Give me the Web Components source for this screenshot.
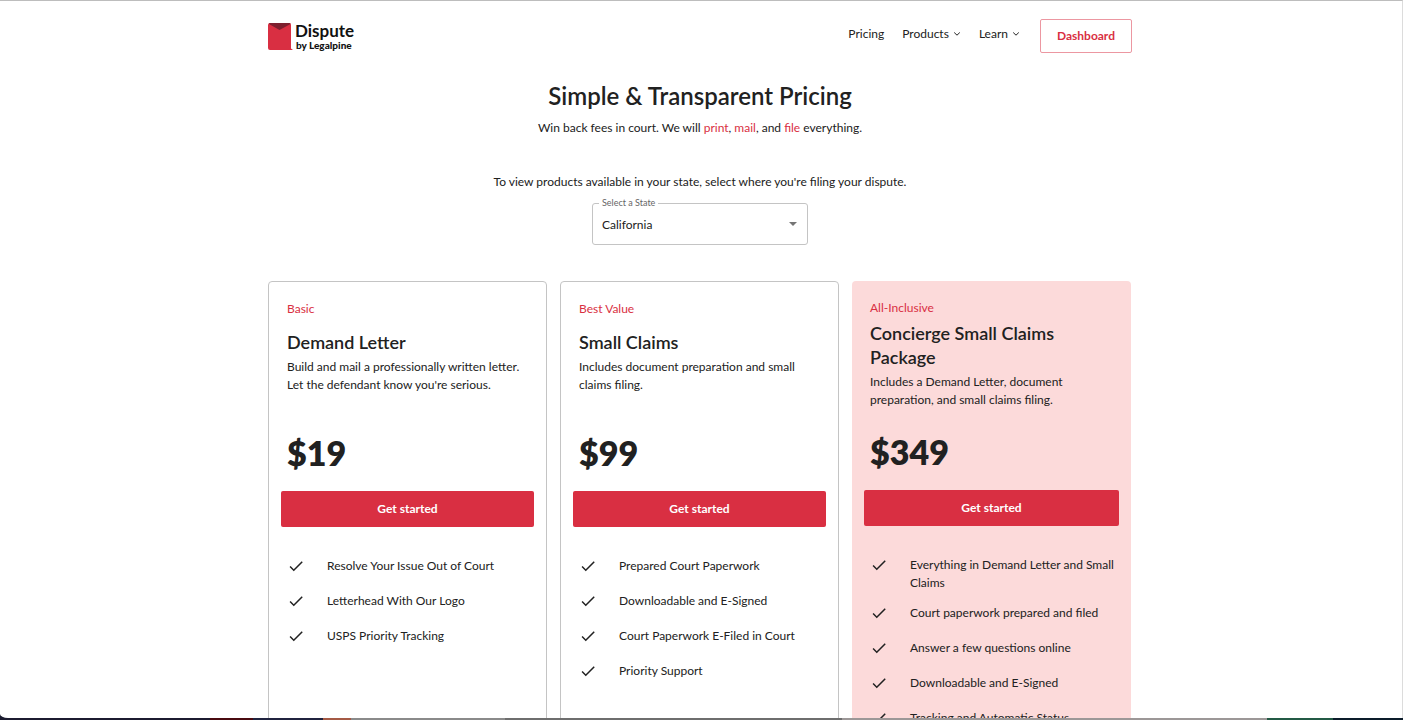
<!DOCTYPE html>
<html lang="en">
<head>
<meta charset="utf-8">
<meta name="viewport" content="width=device-width, initial-scale=1">
<title>Dispute by Legalpine – Pricing</title>
<style>
  html, body { margin: 0; height: 100%; }
  body {
    --brand: #d92f42;
    --ink: #212121;
    --line: #c4c4c4;
    --tint: #fcdada;
    font: 400 12px/18px Lato, "Liberation Sans", sans-serif;
    color: var(--ink);
    background: #fff;
    overflow: hidden;
  }
</style>
</head>
<body>
<app-window>
  <site-header></site-header>
  <pricing-intro></pricing-intro>
  <plan-grid>
    <plan-card label="Basic" heading="Demand Letter" price="$19">
      <span slot="about">Build and mail a professionally written letter. Let the defendant know you're serious.</span>
      <plan-feature>Resolve Your Issue Out of Court</plan-feature>
      <plan-feature>Letterhead With Our Logo</plan-feature>
      <plan-feature>USPS Priority Tracking</plan-feature>
    </plan-card>
    <plan-card label="Best Value" heading="Small Claims" price="$99">
      <span slot="about">Includes document preparation and small claims filing.</span>
      <plan-feature>Prepared Court Paperwork</plan-feature>
      <plan-feature>Downloadable and E-Signed</plan-feature>
      <plan-feature>Court Paperwork E-Filed in Court</plan-feature>
      <plan-feature>Priority Support</plan-feature>
    </plan-card>
    <plan-card featured label="All-Inclusive" heading="Concierge Small Claims Package" price="$349">
      <span slot="about">Includes a Demand Letter, document preparation, and small claims filing.</span>
      <plan-feature>Everything in Demand Letter and Small Claims</plan-feature>
      <plan-feature>Court paperwork prepared and filed</plan-feature>
      <plan-feature>Answer a few questions online</plan-feature>
      <plan-feature>Downloadable and E-Signed</plan-feature>
      <plan-feature>Tracking and Automatic Status</plan-feature>
    </plan-card>
  </plan-grid>
</app-window>

<script>
const define = (name, html, setup) => {
  const template = document.createElement('template');
  template.innerHTML = html;
  customElements.define(name, class extends HTMLElement {
    constructor() {
      super();
      this.attachShadow({ mode: 'open' }).append(template.content.cloneNode(true));
    }
    connectedCallback() { if (setup) setup(this, this.shadowRoot); }
  });
};

define('app-window', `
  <style>
    :host { display: flex; flex-direction: column; height: 100vh; background: #1b1c30; }
    .view {
      flex: 1; min-height: 0; overflow-y: auto; scrollbar-width: none;
      box-sizing: border-box; padding-right: 2px; background: #fff;
      border-top: 1px solid #bdbdbd; border-right: 1px solid #dcdcdc;
      border-bottom-left-radius: 8px 4px;
    }
    .inner { max-width: 864px; margin: 0 auto; }
    .desk {
      height: 2px;
      background: linear-gradient(90deg,
        #1c1b30 0 15%, #4a0a10 15% 18%, #20233f 18% 23%, #a55a45 23% 25%,
        #8a8a8a 25% 36%, #6e6e6e 36% 60%, #9c9797 60% 90.3%, #235a45 90.3% 95%, #0c1c2b 95%);
    }
  </style>
  <div class="view"><div class="inner"><slot></slot></div></div>
  <div class="desk"></div>`);

define('brand-logo', `
  <style>
    :host { display: block; }
    a { display: flex; align-items: center; gap: 2px; color: #111; text-decoration: none; }
    svg { display: block; }
    .name, .by { display: block; white-space: nowrap; }
    .name { font-size: 17px; line-height: 16px; font-weight: 700; }
    .by { font-size: 10px; line-height: 12px; font-weight: 900; padding-left: 1px; }
  </style>
  <a href="#">
    <svg width="25" height="28" viewBox="0 0 25 28" aria-hidden="true">
      <path d="M2 0H21.500Q23 0 23 2V25.500L25 27H2Q0 27 0 25V2Q0 0 2 0Z" fill="#d92f42"/>
      <path d="M1 1Q1 0 2 0H21Q22.500 0 22.500 1L11.500 7Z" fill="#7d1f2e"/>
    </svg>
    <span><span class="name">Dispute</span><span class="by">by Legalpine</span></span>
  </a>`);

define('nav-item', `
  <style>
    :host { display: block; }
    a { display: flex; align-items: center; gap: 4px; color: inherit; text-decoration: none; }
    svg { display: none; }
    :host([menu]) svg { display: block; }
  </style>
  <a href="#"><slot></slot>
    <svg width="8" height="8" viewBox="0 0 8 8" fill="none" stroke="currentColor" stroke-width="1" aria-hidden="true"><path d="M1.200 2.500L4 5.200L6.800 2.500"/></svg>
  </a>`);

define('site-header', `
  <style>
    :host { display: block; }
    header { display: flex; justify-content: space-between; align-items: flex-start; padding-top: 18px; }
    brand-logo { padding-top: 4px; }
    nav { display: flex; gap: 20px; }
    .links { display: flex; gap: 18px; padding-top: 6px; }
    button {
      box-sizing: border-box; height: 34px; min-width: 92px; padding: 0 16px;
      font: inherit; font-weight: 700; color: var(--brand);
      background: #fff; border: 1px solid #ec97a1; border-radius: 2px;
    }
  </style>
  <header>
    <brand-logo></brand-logo>
    <nav>
      <div class="links">
        <nav-item>Pricing</nav-item>
        <nav-item menu>Products</nav-item>
        <nav-item menu>Learn</nav-item>
      </div>
      <button type="button">Dashboard</button>
    </nav>
  </header>`);

define('state-select', `
  <style>
    :host { display: block; width: 216px; }
    .field { position: relative; }
    label {
      position: absolute; left: 7px; top: -6px; padding: 0 3px;
      font-size: 9px; line-height: 12px; color: #666; background: #fff;
    }
    select {
      appearance: none; display: block; box-sizing: border-box; width: 100%; height: 42px;
      padding: 2px 30px 0 9px; font: inherit; color: inherit; background: #fff;
      border: 1px solid var(--line); border-radius: 3px;
    }
    svg { position: absolute; right: 11px; top: 19px; pointer-events: none; }
  </style>
  <div class="field">
    <select id="state"><option>California</option><option>New York</option><option>Texas</option></select>
    <label for="state">Select a State</label>
    <svg width="8" height="4" viewBox="0 0 8 4" aria-hidden="true"><path d="M0 0H8L4 4Z" fill="#757575"/></svg>
  </div>`);

define('pricing-intro', `
  <style>
    :host { display: flex; flex-direction: column; align-items: center; padding: 27px 0 36px; text-align: center; }
    h1 { margin: 0; font-size: 24px; line-height: 32px; font-weight: 600; }
    p { margin: 0; }
    .lead { margin-top: 7px; }
    .hint { margin-top: 36px; }
    a { color: var(--brand); text-decoration: none; }
    state-select { margin-top: 12px; text-align: left; }
  </style>
  <h1>Simple &amp; Transparent Pricing</h1>
  <p class="lead">Win back fees in court. We will <a href="#">print</a>, <a href="#">mail</a>, and <a href="#">file</a> everything.</p>
  <p class="hint">To view products available in your state, select where you're filing your dispute.</p>
  <state-select></state-select>`);

define('plan-grid', `
  <style>
    :host { display: grid; grid-template-columns: repeat(auto-fit, minmax(240px, 1fr)); gap: 13px; padding: 0 1px 40px 0; }
  </style>
  <slot></slot>`);

define('plan-card', `
  <style>
    :host {
      display: block; box-sizing: border-box; padding: 18px 12px;
      border: 1px solid var(--line); border-radius: 4px;
      --title-gap: 12px;
    }
    :host([featured]) { border: 0; background: var(--tint); --title-gap: 4px; }
    .info { min-height: 133px; padding: 0 6px; }
    .label { margin: 0; color: var(--brand); }
    h2 { margin: var(--title-gap) 0 4px; font-size: 18px; line-height: 24px; font-weight: 600; }
    .about { margin: 0; }
    .price { margin: 0; padding: 0 6px; font-size: 34px; line-height: 40px; font-weight: 800; }
    button {
      display: block; width: 100%; height: 36px; margin-top: 18px; border: 0; border-radius: 2px;
      font: inherit; font-weight: 700; color: #fff; background: var(--brand);
    }
    .features { margin-top: 22px; }
  </style>
  <div class="info">
    <p class="label"></p>
    <h2></h2>
    <p class="about"><slot name="about"></slot></p>
  </div>
  <p class="price"></p>
  <button type="button">Get started</button>
  <div class="features" role="list"><slot></slot></div>`,
  (host, root) => {
    root.querySelector('.label').textContent = host.getAttribute('label');
    root.querySelector('h2').textContent = host.getAttribute('heading');
    root.querySelector('.price').textContent = host.getAttribute('price');
  });

define('plan-feature', `
  <style>
    :host {
      display: flex; gap: 22px; align-items: flex-start; box-sizing: border-box;
      min-height: 35px; padding: 8px 0 4px 6px;
    }
    svg { flex: none; display: block; }
  </style>
  <svg width="18" height="18" viewBox="0 0 24 24" fill="currentColor" aria-hidden="true"><path d="M9 16.170L4.830 12l-1.420 1.410L9 19 21 7l-1.410-1.410z"/></svg>
  <span><slot></slot></span>`,
  host => host.setAttribute('role', 'listitem'));
</script>
</body>
</html>
